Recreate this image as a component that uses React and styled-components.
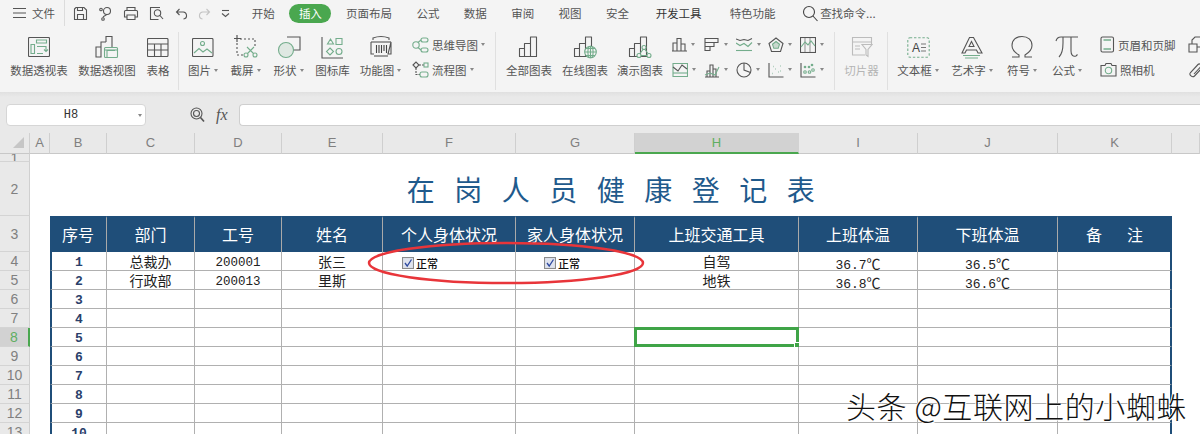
import React from 'react';
import styled, { createGlobalStyle } from 'styled-components';

const GREEN = '#74ad8c';
const GRAY = '#555';
const NAVY = '#1f4e79';
const CJK = '"Noto Sans CJK SC", "Noto Sans", sans-serif';
const MONO = '"Liberation Mono", "Noto Sans CJK SC", monospace';

const GlobalStyle = createGlobalStyle`
  html, body { margin: 0; padding: 0; height: 434px; overflow: hidden; background: #fff; }
  body { font-family: ${CJK}; }
`;

const Page = styled.div`
  position: relative;
  width: 1200px;
  height: 434px;
  overflow: hidden;
`;

/* ---- top tab row ---- */
const TabBar = styled.div`
  display: flex;
  align-items: center;
  height: 26px;
  padding-left: 13px;
  background: #f4f4f4;
  font-size: 11.5px;
  color: #555;
  white-space: nowrap;
`;
const FileMenu = styled.div`
  display: flex;
  align-items: center;
  gap: 5px;
  width: 52px;
  height: 26px;
  box-sizing: border-box;
  border-right: 1px solid #dcdcdc;
`;
const QuickTools = styled.div`
  display: flex;
  align-items: center;
  justify-content: space-between;
  width: 158px;
  margin: 0 8.5px 0 8px;
`;
const Tab = styled.div`
  padding: 0 ${p => p.$pad || 12.2}px;
  color: ${p => (p.$dark ? '#333' : '#555')};
`;
const ActiveTab = styled.div`
  width: 42px;
  height: 19px;
  margin: 0 2.5px;
  border-radius: 10px;
  background: #4aa74f;
  color: #fff;
  font-size: 11.5px;
  line-height: 19px;
  text-align: center;
`;
const Search = styled.div`
  display: flex;
  align-items: center;
  gap: 1px;
  margin-left: 13px;
`;

/* ---- ribbon ---- */
const Ribbon = styled.div`
  display: flex;
  height: 66px;
  background: #f4f4f4;
  overflow: hidden;
`;
const Group = styled.div`
  display: flex;
  flex: none;
  gap: ${p => p.$gap || 12}px;
  height: 58px;
  margin-top: 6px;
  padding: 0 ${p => p.$right ?? 8}px 0 ${p => p.$left ?? 9}px;
  box-sizing: border-box;
  border-right: ${p => (p.$last ? 'none' : '1px solid #e0e0e0')};
`;
const Big = styled.div`
  display: flex;
  flex-direction: column;
  align-items: center;
  flex: none;
  width: ${p => p.$w}px;
  color: ${p => (p.$muted ? '#b4b4b4' : '#555')};
  font-size: 11.5px;
  white-space: nowrap;
`;
const BigIcon = styled.div`
  display: flex;
  align-items: center;
  justify-content: center;
  height: 26px;
  margin: 2px 0 3px;
`;
const Label = styled.div`
  display: flex;
  align-items: center;
  gap: 3px;
  height: 14px;
  line-height: 14px;
`;
const Caret = styled.i`
  flex: none;
  width: 0;
  height: 0;
  border-left: 2.5px solid transparent;
  border-right: 2.5px solid transparent;
  border-top: 3px solid #888;
`;
const Stack = styled.div`
  display: flex;
  flex-direction: column;
  flex: none;
  margin-left: ${p => p.$left || 0}px;
`;
const Small = styled.div`
  display: flex;
  align-items: center;
  gap: ${p => p.$gap ?? 3}px;
  height: 25px;
  color: #555;
  font-size: 11.5px;
  white-space: nowrap;
`;
const ChartGrid = styled.div`
  display: grid;
  grid-template-columns: repeat(5, 32px);
  grid-auto-rows: 25px;
`;

/* ---- formula bar ---- */
const FormulaBar = styled.div`
  display: flex;
  align-items: center;
  height: 41px;
  padding: 4px 0 0 6px;
  box-sizing: border-box;
  background: linear-gradient(#e0e0e0, #e9e9e9 5px);
`;
const NameBox = styled.div`
  position: relative;
  width: 140px;
  height: 22px;
  padding-right: 10px;
  box-sizing: border-box;
  border: 1px solid #d6d6d6;
  border-radius: 4px;
  background: #fff;
  font: 12px/20px ${MONO};
  color: #333;
  text-align: center;
`;
const NameCaret = styled(Caret)`
  position: absolute;
  right: 3px;
  top: 9px;
`;
const FxTools = styled.div`
  display: flex;
  align-items: center;
  gap: 11px;
  margin: 0 11px 0 44px;
`;
const Fx = styled.span`
  font: italic 16px "Liberation Serif", serif;
  color: #555;
`;
const FormulaInput = styled.div`
  flex: 1;
  height: 22px;
  box-sizing: border-box;
  border: 1px solid #cfcfcf;
  border-right: none;
  border-radius: 4px 0 0 4px;
  background: #fff;
`;

/* ---- sheet ---- */
const Sheet = styled.div`
  display: grid;
  grid-template-columns: 30px 20px 57px 88px 87px 101px 133px 119px 164px 119px 140px 114px 28px;
  grid-template-rows: 21px 8px 54px 36px repeat(10, 19px);
`;
const Corner = styled.div`
  display: flex;
  align-items: center;
  justify-content: flex-end;
  padding-right: 4px;
  background: #e9e9e9;
  border-right: 1px solid #d0d0d0;
  border-bottom: 1px solid #c8c8c8;
`;
const ColHead = styled.div`
  background: ${p => (p.$on ? '#d2d2d2' : '#e9e9e9')};
  border-right: 1px solid ${p => (p.$on ? '#d2d2d2' : '#cfcfcf')};
  border-bottom: ${p => (p.$on ? '2px solid #4aa74f' : '1px solid #c8c8c8')};
  color: ${p => (p.$on ? '#5fae62' : '#808080')};
  font: 13px/20px "Liberation Sans", sans-serif;
  text-align: center;
`;
const RowHead = styled.div`
  display: flex;
  align-items: center;
  justify-content: center;
  overflow: hidden;
  box-sizing: border-box;
  background: ${p => (p.$on ? '#d2d2d2' : '#e9e9e9')};
  border-right: ${p => (p.$on ? '2px solid #4aa74f' : '1px solid #d0d0d0')};
  border-bottom: 1px solid #d4d4d4;
  color: ${p => (p.$on ? '#5fae62' : '#808080')};
  font: 14px "Liberation Sans", sans-serif;
`;
const Blank = styled.div`
  grid-column: span ${p => p.$span || 1};
  background: #fff;
`;
const Title = styled.div`
  grid-column: span 10;
  padding: 3px 0 0 19px;
  box-sizing: border-box;
  font-size: 28px;
  line-height: 48px;
  font-weight: 400;
  letter-spacing: 19.5px;
  color: #1f5a8c;
  text-align: center;
  white-space: nowrap;
`;
const HeadCell = styled.div`
  box-sizing: border-box;
  background: ${NAVY};
  border-right: 1px solid ${p => (p.$last ? NAVY : '#a9a9a9')};
  border-top: 2px solid ${NAVY};
  color: #fff;
  font-size: 16px;
  line-height: 33px;
  text-align: center;
  white-space: pre;
`;
const Cell = styled.div`
  position: relative;
  display: flex;
  align-items: center;
  justify-content: ${p => (p.$pad ? 'flex-start' : 'center')};
  padding: 0 0 0 ${p => p.$pad || 0}px;
  box-sizing: border-box;
  background: #fff;
  border-right: ${p => (p.$edge === 'right' ? `2px solid ${NAVY}` : '1px solid #b0b0b0')};
  border-left: ${p => (p.$edge === 'left' ? `2px solid ${NAVY}` : 'none')};
  border-bottom: 1px solid #b0b0b0;
  color: #222;
  font-size: 14px;
  white-space: nowrap;
`;
const Index = styled.span`
  margin-top: 3px;
  font: bold 13px ${MONO};
  color: #2a3f6b;
`;
const Code = styled.span`
  margin-top: 3px;
  font: 12.5px ${MONO};
  color: #222;
`;
const Temp = styled.span`
  margin-top: 3px;
  font: 13px ${MONO};
  color: #222;
`;
const Degree = styled.span`
  font-family: ${CJK};
  font-size: 14px;
`;
const Check = styled.div`
  display: flex;
  align-items: center;
  gap: 2px;
  margin-top: 3px;
  font-size: 11px;
  font-weight: 500;
  color: #111;
`;
const Selection = styled.div`
  position: absolute;
  inset: -1px;
  border: 3px solid #3fa447;
  pointer-events: none;
  &::after {
    content: '';
    position: absolute;
    right: -5px;
    bottom: -5px;
    width: 5px;
    height: 5px;
    background: #3fa447;
    border: 0.5px solid #fff;
  }
`;
const Oval = styled.svg`
  position: absolute;
  left: 366px;
  top: 240px;
`;
const Watermark = styled.div`
  position: absolute;
  left: 846px;
  top: 385px;
  font-size: 30px;
  line-height: 40px;
  font-weight: 300;
  letter-spacing: 0.6px;
  color: #111;
  text-shadow: 1px 1px 0 #fff, -1px 0 0 #fff;
  white-space: pre;
`;

/* ---- icons ---- */
const Svg = styled.svg`
  display: block;
  flex: none;
  fill: none;
  stroke: ${p => p.$c || GRAY};
  stroke-width: 1.1;
`;
const Ic = ({ w = 24, h = 24, c, children }) => (
  <Svg width={w} height={h} viewBox={`0 0 ${w} ${h}`} $c={c}>{children}</Svg>
);

const Bars = () => (
  <path d="M1.500 21.500v-8h5v8zM6.500 21.500v-13h6v13zM12.500 21.500v-19.500h6v19.500z" strokeLinejoin="round" />
);

const icons = {
  menu: <Ic w={14} h={12}><path d="M0 1.500h13M0 6h13M0 10.500h13" /></Ic>,
  save: <Ic w={15} h={15}><path d="M1.500 3l1.500-1.500h8l2.500 2.500v9.500h-12z" /><path d="M4.500 13.500v-5h6v5M4.500 1.500v3h5v-3" /></Ic>,
  share: <Ic w={15} h={15}><circle cx="9" cy="5" r="3.500" /><circle cx="3" cy="3.500" r="1.300" /><circle cx="5" cy="13" r="1.300" /><path d="M5 11.500c.5-2 4-2 4-3.500" /></Ic>,
  print: <Ic w={16} h={15}><path d="M4 5V1.500h8V5M4 11H1.500V5.500q0-1 1-1h11q1 0 1 1V11H12" /><path d="M4 9h8v4.500H4z" /></Ic>,
  preview: <Ic w={16} h={15}><path d="M11 1.500H1.500v12h8" /><circle cx="8.500" cy="7" r="3.200" /><path d="M11 9.500l3 3.500" /></Ic>,
  undo: <Ic w={13} h={13}><path d="M4.500 2L1.500 5l3 3M1.500 5h6a3.500 3.500 0 0 1 1 7" /></Ic>,
  redo: <Ic w={13} h={13} c="#c4c4c4"><path d="M8.500 2l3 3-3 3M11.500 5h-6a3.500 3.500 0 0 0-1 7" /></Ic>,
  more: <Ic w={10} h={9}><path d="M1 1.500h7" /><path d="M1 4.500l3.500 3 3.500-3" /></Ic>,
  find: <Ic w={17} h={17} c="#444"><circle cx="7" cy="7" r="5.500" /><path d="M11 11l4.500 5" /></Ic>,
  pivotTable: (
    <Ic w={22} h={20}>
      <rect x=".5" y=".5" width="21" height="19" rx="1" />
      <g stroke={GREEN}><path d="M8.500 3h10v3h-10zM3 7.500h3.500v9H3zM9 9.500h9v4.500M16 12.500l2 2 2-2M9 16.500h6" /></g>
    </Ic>
  ),
  pivotChart: (
    <Ic w={24} h={24}>
      <path d="M1 22V12h5v10zM6 22V7h5M11 7V1.500h6V12" />
      <g stroke={GREEN}><rect x="9.500" y="12.500" width="13" height="10" rx="1" /><path d="M12 22v-6.500h8" /><path d="M9.500 15h13" /></g>
    </Ic>
  ),
  table: <Ic w={22} h={19}><rect x=".5" y=".5" width="20.500" height="18" rx="1" /><path d="M.5 6h20.500M.5 12h20.500M7.500 6v12.500M14 6v12.500" /></Ic>,
  picture: (
    <Ic w={22} h={19}>
      <rect x=".5" y=".5" width="20.500" height="18" rx="1" />
      <g stroke={GREEN}><circle cx="10.500" cy="5.500" r="2" /><path d="M2 15l5-4.500 4 3.500 4-3 5 4" /></g>
    </Ic>
  ),
  shot: (
    <Ic w={24} h={24}>
      <path d="M6 4h15v8M3 8v12h7" strokeDasharray="2 2" />
      <path d="M3 0v7M0 3.500h7" strokeWidth="1.200" />
      <g stroke={GREEN}><circle cx="12" cy="20" r="2" /><circle cx="21" cy="20" r="2" /><path d="M13.500 18.500L20 12M19.500 18.500L13 12" /></g>
    </Ic>
  ),
  shape: (
    <Ic w={24} h={24}>
      <path d="M10 2h13v13H16" />
      <circle cx="9" cy="15" r="7.500" fill="#dfe8e2" stroke={GREEN} />
    </Ic>
  ),
  gallery: (
    <Ic w={23} h={23}>
      <path d="M1 1v21h21" />
      <g stroke={GREEN}><path d="M9.500 3l3 5h-6zM15 2.500h6v6h-6zM9 12l3.500 3.500L9 19l-3.500-3.500z" /><circle cx="18" cy="15.500" r="3" /></g>
    </Ic>
  ),
  feature: (
    <Ic w={22} h={24}>
      <path d="M3 5V3q8-3 16 0v2" />
      <path d="M1 7v12h3M18 19h3V7z" />
      <path d="M1 7h20" />
      <path d="M6.500 10v8M9 10v8M11.500 10v8M14 10v6M16.500 10v8" stroke="#444" />
      <path d="M4 21h14" />
    </Ic>
  ),
  mind: (
    <Ic w={17} h={16} c={GREEN}>
      <circle cx="4" cy="8" r="3.200" /><rect x="9" y="1" width="7" height="4" rx="2" /><rect x="9" y="11" width="7" height="4" rx="2" />
      <path d="M6 5.500L9 3M6 10.500L9 13" />
    </Ic>
  ),
  flow: (
    <Ic w={17} h={17}>
      <path d="M1 4l3-3 3 3-3 3z" stroke={GRAY} />
      <path d="M7 4h6M4 7v6.500h4" stroke={GRAY} strokeDasharray="2 1" />
      <rect x="8" y="11" width="8" height="5" rx="2" stroke={GREEN} />
      <rect x="12" y="2" width="4" height="4" stroke={GREEN} />
    </Ic>
  ),
  allCharts: <Ic w={22} h={24}><Bars /></Ic>,
  onlineCharts: (
    <Ic w={24} h={24}>
      <Bars />
      <g stroke={GREEN}><circle cx="17.500" cy="17" r="5.800" fill="#f4f4f4" /><path d="M11.700 17h11.600M17.500 11.200v11.600M13 13.500h9M13 20.500h9" /><ellipse cx="17.500" cy="17" rx="2.600" ry="5.800" /></g>
    </Ic>
  ),
  showCharts: (
    <Ic w={24} h={24}>
      <Bars />
      <g stroke={GREEN}><circle cx="16" cy="12.500" r="2" fill="#f4f4f4" /><circle cx="11" cy="20.500" r="2" fill="#f4f4f4" /><circle cx="21" cy="20.500" r="2" fill="#f4f4f4" /><path d="M15 14.500l-3 4M17 14.500l3 4M13 20.500h6" /></g>
    </Ic>
  ),
  c1: <Ic w={15} h={15}><path d="M1 14V6h4v8M5 14V1.500h4V14M9 14V7h4v7M0 14h15" /></Ic>,
  c2: <Ic w={16} h={15}><path d="M1 1v13M1 1.500h13v4H1M1 5.500h9v4H1M1 9.500h5v4H1" /></Ic>,
  c3: <Ic w={17} h={15}><path d="M0 13.500h16" stroke={GREEN} /><path d="M0 6l4 2.500 4-2 4 3 4-4" stroke={GREEN} /><path d="M0 2l4 1.500 4-1 4 1 4-2" /></Ic>,
  c4: <Ic w={16} h={16}><path d="M8 1l7 5.500-2.500 8h-9L1 6.500z" /><path d="M8 4.500l3.500 2.800-1.300 4H5.800l-1.300-4z" fill="#c8d8ce" stroke={GREEN} /></Ic>,
  c5: <Ic w={16} h={16}><path d="M1 14.500V1.500h14.500v13z" stroke={GREEN} /><path d="M1 5l5 4 4-6 5 4" stroke={GRAY} /><path d="M1 11h14.500" stroke={GREEN} /></Ic>,
  c6: <Ic w={16} h={16}><path d="M1 15h14M3 15V9h3v6M6 15V3h3v12M9 15V7h3v8" /><path d="M1 13l5-2 5 2 4-8" stroke={GREEN} /></Ic>,
  c7: <Ic w={16} h={16}><circle cx="8" cy="8" r="7" /><path d="M8 1v7l6.500 2.500" /></Ic>,
  c8: <Ic w={16} h={16}><path d="M1 1v14h14.500" /><path d="M4.500 11.500h.5M7 7h.5M5 4.500h.5M10 10h.5M12 4h.5M12 9h.5" stroke={GREEN} strokeWidth="1.600" /></Ic>,
  c9: <Ic w={16} h={16}><rect x=".5" y=".5" width="15" height="15" /><path d="M5 1v14M10 1v14" stroke="#999" /><path d="M1 10l4-5 3 3 3-4 4 5" stroke={GREEN} /></Ic>,
  c10: <Ic w={16} h={16}><path d="M1 1v14h14.500" /><g fill={GREEN} stroke="none"><circle cx="5" cy="5" r="1.300" /><circle cx="9" cy="5" r="1.300" /><circle cx="12" cy="3" r="1.300" /></g><g stroke={GREEN}><circle cx="5" cy="10" r="1.300" /><circle cx="9.500" cy="10" r="1.300" /><circle cx="13" cy="8" r="1.300" /></g></Ic>,
  slicer: (
    <Ic w={22} h={22} c="#bcbcbc">
      <path d="M14 19H1.500V1.500h19V9" /><path d="M1.500 6h19M4 10h5M4 13h5" />
      <path d="M11 8.500h10l-4 5v7l-2-1.500v-5.500z" />
    </Ic>
  ),
  textBox: (
    <Ic w={23} h={21} c={GREEN}>
      <rect x=".8" y=".8" width="21.400" height="19.400" rx="2" strokeDasharray="2.400 1.800" />
      <text x="5" y="15" fontSize="12" fontFamily="Liberation Sans" fill="#444" stroke="none">A</text>
      <path d="M14 7h5M14 10.500h5M14 14h5" stroke="#777" />
    </Ic>
  ),
  artText: (
    <Ic w={22} h={23}>
      <path d="M8.500 1.500h4L21 17h-4l-1.500-3h-10L4 17H1z" />
      <path d="M8 10.500l2.500-5 2.500 5z" />
      <g stroke={GREEN}><path d="M2 19.500h17M4 22h13" /></g>
    </Ic>
  ),
  omega: <Ic w={22} h={24}><path d="M1 22h7v-2C3 17 1 14 1 10.500 1 5 5 1.500 11 1.500S21 5 21 10.500c0 3.500-2 6.500-7 9.500v2h7" /></Ic>,
  pi: <Ic w={24} h={24}><path d="M1 6q1-4 5-4h17M8 2v6c0 7-1 11-4 14M16 2v14c0 4 2 6 5 5l1.500-1.500" /></Ic>,
  header: <Ic w={15} h={17}><rect x="1" y="1" width="12.500" height="15" rx="1.500" /><path d="M3.500 4h7.500M3.500 13h7.500" stroke={GREEN} strokeWidth="1.500" /></Ic>,
  camera: <Ic w={17} h={15}><path d="M1 3.500h4l1-2h5l1 2h4v10.500H1z" /><circle cx="8.500" cy="8.500" r="3.200" stroke={GREEN} /></Ic>,
  copy: <Ic w={15} h={17}><path d="M1 8h8v8H1zM4 8V4l3-3h7v10H9" /></Ic>,
  clip: <Ic w={16} h={16}><path d="M14 6l-7.500 8c-2 2-6 -1-4-3.500L10 2.500c1.500-1.500 4 .5 2.500 2.500L6 12" /></Ic>,
  lens: <Ic w={15} h={16}><circle cx="6.500" cy="6.500" r="5.500" /><circle cx="6.500" cy="6.500" r="3" /><path d="M10.500 10.500l3.500 4" strokeWidth="1.600" /></Ic>,
  check: (
    <Ic w={12} h={12} c="#8b8b8b">
      <rect x=".5" y=".5" width="11" height="11" fill="#dfe3ee" />
      <path d="M3 6l2.200 3L9.500 2.500" stroke="#2f4aa0" strokeWidth="1.300" />
    </Ic>
  ),
};

const BigBtn = ({ w, icon, label, caret, muted }) => (
  <Big $w={w} $muted={muted}>
    <BigIcon>{icons[icon]}</BigIcon>
    <Label>{label}{caret && <Caret />}</Label>
  </Big>
);

const chartIcons = ['c1', 'c2', 'c3', 'c4', 'c9', 'c5', 'c6', 'c7', 'c8', 'c10'];
const columns = [
  ['A'], ['B'], ['C'], ['D'], ['E'], ['F'], ['G'], ['H', true], ['I'], ['J'], ['K'], [''],
];
const headers = ['序号', '部门', '工号', '姓名', '个人身体状况', '家人身体状况', '上班交通工具', '上班体温', '下班体温', '备       注'];

const rows = [
  { dept: '总裁办', code: '200001', name: '张三', check: true, way: '自驾', am: '36.7', pm: '36.5' },
  { dept: '行政部', code: '200013', name: '里斯', way: '地铁', am: '36.8', pm: '36.6' },
  {}, {}, {}, {}, {}, {}, {}, {},
];

const Celsius = ({ value }) => (
  <Temp>{value}<Degree>℃</Degree></Temp>
);

const Status = () => (
  <Check>{icons.check}正常</Check>
);

const DataRow = ({ row, i }) => {
  const no = i + 4;
  return (
    <>
      <RowHead $on={no === 8}>{no}</RowHead>
      <Blank />
      <Cell $edge="left"><Index>{i + 1}</Index></Cell>
      <Cell>{row.dept}</Cell>
      <Cell>{row.code && <Code>{row.code}</Code>}</Cell>
      <Cell>{row.name}</Cell>
      <Cell $pad={row.check ? 19 : 0}>{row.check && <Status />}</Cell>
      <Cell $pad={row.check ? 28 : 0}>{row.check && <Status />}</Cell>
      <Cell>
        {row.way}
        {no === 8 && <Selection />}
      </Cell>
      <Cell>{row.am && <Celsius value={row.am} />}</Cell>
      <Cell>{row.pm && <Celsius value={row.pm} />}</Cell>
      <Cell $edge="right" />
      <Blank />
    </>
  );
};

export default function App() {
  return (
    <Page>
      <GlobalStyle />
      <TabBar>
        <FileMenu>{icons.menu}<span>文件</span></FileMenu>
        <QuickTools>
          {icons.save}{icons.share}{icons.print}{icons.preview}{icons.undo}{icons.redo}{icons.more}
        </QuickTools>
        <Tab>开始</Tab>
        <ActiveTab>插入</ActiveTab>
        <Tab>页面布局</Tab>
        <Tab>公式</Tab>
        <Tab>数据</Tab>
        <Tab>审阅</Tab>
        <Tab>视图</Tab>
        <Tab>安全</Tab>
        <Tab $pad={14.5} $dark>开发工具</Tab>
        <Tab $pad={13.5}>特色功能</Tab>
        <Search>{icons.find}查找命令...</Search>
      </TabBar>

      <Ribbon>
        <Group $left={10} $gap={10}>
          <BigBtn w={58} icon="pivotTable" label="数据透视表" />
          <BigBtn w={58} icon="pivotChart" label="数据透视图" />
          <BigBtn w={24} icon="table" label="表格" />
        </Group>
        <Group $right={10}>
          <BigBtn w={30} icon="picture" label="图片" caret />
          <BigBtn w={31} icon="shot" label="截屏" caret />
          <BigBtn w={31} icon="shape" label="形状" caret />
          <BigBtn w={33} icon="gallery" label="图标库" />
          <BigBtn w={39} icon="feature" label="功能图" caret />
          <Stack>
            <Small>{icons.mind}思维导图<Caret /></Small>
            <Small>{icons.flow}流程图<Caret /></Small>
          </Stack>
        </Group>
        <Group $left={10} $right={2} $gap={10}>
          <BigBtn w={46} icon="allCharts" label="全部图表" />
          <BigBtn w={46} icon="onlineCharts" label="在线图表" />
          <BigBtn w={44} icon="showCharts" label="演示图表" />
          <ChartGrid>
            {chartIcons.map(name => (
              <Small key={name} $gap={4}>{icons[name]}<Caret /></Small>
            ))}
          </ChartGrid>
        </Group>
        <Group>
          <BigBtn w={35} icon="slicer" label="切片器" muted />
        </Group>
        <Group $last>
          <BigBtn w={42} icon="textBox" label="文本框" caret />
          <BigBtn w={42} icon="artText" label="艺术字" caret />
          <BigBtn w={34} icon="omega" label="符号" caret />
          <BigBtn w={32} icon="pi" label="公式" caret />
          <Stack $left={5}>
            <Small>{icons.header}页眉和页脚</Small>
            <Small>{icons.camera}照相机</Small>
          </Stack>
          <Stack>
            <Small>{icons.copy}</Small>
            <Small>{icons.clip}</Small>
          </Stack>
        </Group>
      </Ribbon>

      <FormulaBar>
        <NameBox>H8<NameCaret /></NameBox>
        <FxTools>{icons.lens}<Fx>fx</Fx></FxTools>
        <FormulaInput />
      </FormulaBar>

      <Sheet>
        <Corner>
          <Ic w={12} h={12} c="none"><path d="M11 0v11H0z" fill="#c6c6c6" /></Ic>
        </Corner>
        {columns.map(([name, on], i) => (
          <ColHead key={i} $on={on}>{name}</ColHead>
        ))}

        <RowHead>1</RowHead>
        <Blank $span={12} />

        <RowHead>2</RowHead>
        <Blank />
        <Title>在岗人员健康登记表</Title>
        <Blank />

        <RowHead>3</RowHead>
        <Blank />
        {headers.map((text, i) => (
          <HeadCell key={text} $last={i === headers.length - 1}>{text}</HeadCell>
        ))}
        <Blank />

        {rows.map((row, i) => (
          <DataRow key={i} row={row} i={i} />
        ))}
      </Sheet>

      <Oval width="282" height="46" viewBox="0 0 282 46" fill="none">
        <ellipse cx="140" cy="23" rx="137" ry="20" stroke="#e8353a" strokeWidth="2.5" />
      </Oval>
      <Watermark>头条 @互联网上的小蜘蛛</Watermark>
    </Page>
  );
}
